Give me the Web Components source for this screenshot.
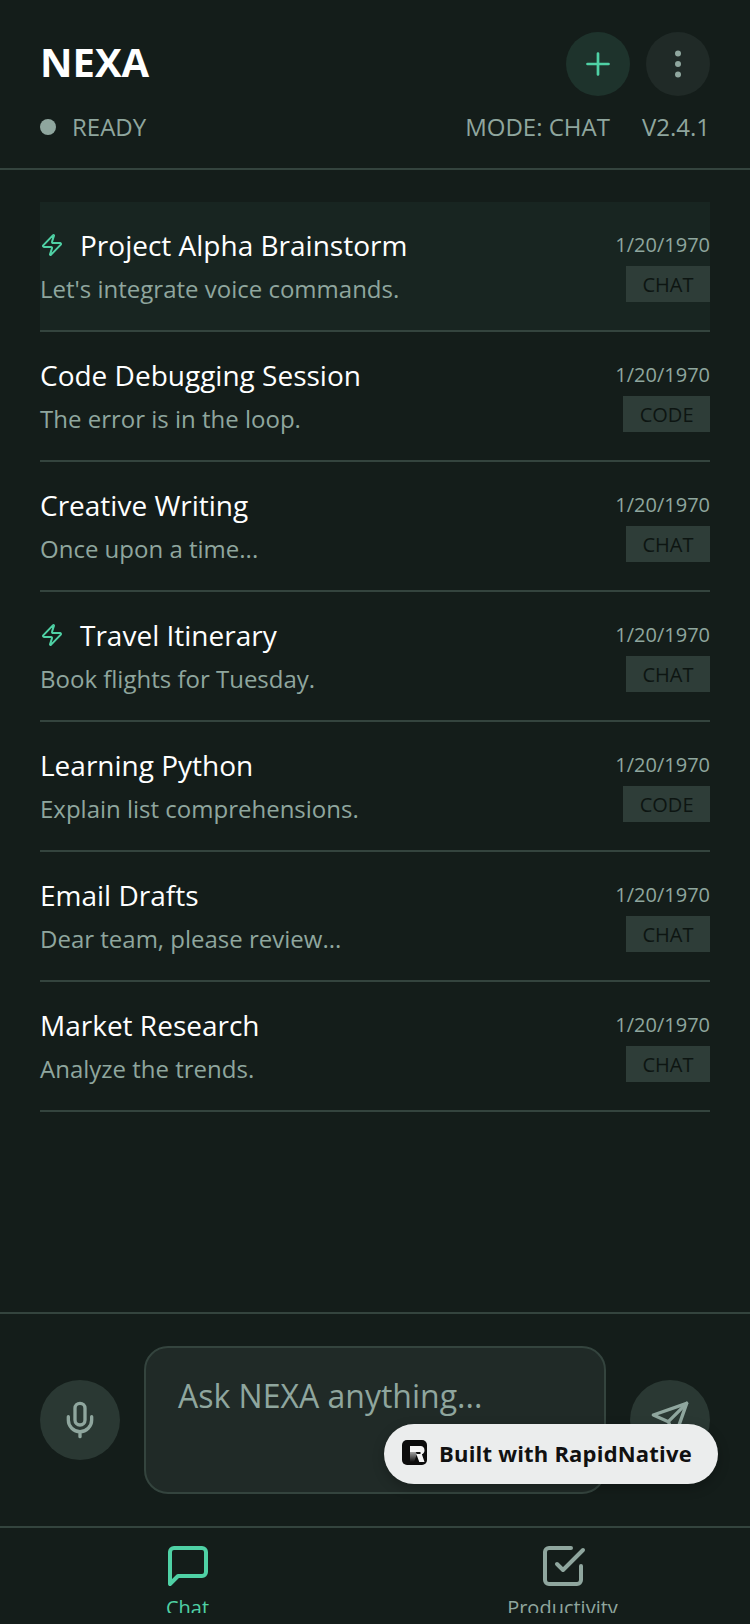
<!DOCTYPE html>
<html>
<head>
<meta charset="utf-8">
<title>NEXA</title>
<style>
    html, body {
        margin: 0;
        height: 1624px;
        overflow: hidden;
        background: #141d1a;
        font-family: "Open Sans", sans-serif;
    }
    nexa-app {
        --bg: #141d1a;
        --line: #34443e;
        --muted: #8fa69e;
        --accent: #4fd1a5;
    }
</style>
</head>
<body>
<nexa-app>
    <nexa-header></nexa-header>
    <nexa-list>
        <nexa-row title="Project Alpha Brainstorm" text="Let's integrate voice commands." tag="CHAT" bolt active></nexa-row>
        <nexa-row title="Code Debugging Session" text="The error is in the loop." tag="CODE"></nexa-row>
        <nexa-row title="Creative Writing" text="Once upon a time..." tag="CHAT"></nexa-row>
        <nexa-row title="Travel Itinerary" text="Book flights for Tuesday." tag="CHAT" bolt></nexa-row>
        <nexa-row title="Learning Python" text="Explain list comprehensions." tag="CODE"></nexa-row>
        <nexa-row title="Email Drafts" text="Dear team, please review..." tag="CHAT"></nexa-row>
        <nexa-row title="Market Research" text="Analyze the trends." tag="CHAT"></nexa-row>
    </nexa-list>
    <nexa-input></nexa-input>
    <nexa-tabs></nexa-tabs>
    <nexa-badge></nexa-badge>
</nexa-app>

<script>
class NexaApp extends HTMLElement {
    constructor() {
        super()
        this.attachShadow({ mode: 'open' }).innerHTML = `
<style>
    :host {
        display: flex;
        flex-direction: column;
        position: relative;
        width: 750px;
        height: 1624px;
        box-sizing: border-box;
        padding-bottom: 11px;
        overflow: hidden;
        background: var(--bg);
    }
</style>
<slot></slot>`
    }
}

class NexaHeader extends HTMLElement {
    constructor() {
        super()
        this.attachShadow({ mode: 'open' }).innerHTML = `
<style>
    :host {
        display: block;
        height: 168px;
        padding: 0 40px;
        border-bottom: 2px solid var(--line);
    }
    .top {
        display: flex;
        justify-content: space-between;
        align-items: center;
        padding-top: 32px;
    }
    h1 {
        margin: 0 0 4px;
        font-size: 40px;
        line-height: 60px;
        font-weight: 700;
        color: #fff;
    }
    .btns {
        display: flex;
        gap: 16px;
    }
    .btn {
        width: 64px;
        height: 64px;
        border-radius: 50%;
        display: flex;
        align-items: center;
        justify-content: center;
    }
    .add { background: #1e332c; }
    .more { background: #202a27; }
    .status {
        display: flex;
        align-items: center;
        margin-top: 15px;
        font-size: 24px;
        line-height: 32px;
        color: var(--muted);
    }
    .dot {
        width: 16px;
        height: 16px;
        border-radius: 50%;
        background: var(--muted);
        margin-right: 16px;
    }
    .mode {
        margin-left: auto;
        margin-right: 32px;
    }
</style>
<div class="top">
    <h1>NEXA</h1>
    <div class="btns">
        <div class="btn add">
            <svg width="36" height="36" viewBox="0 0 24 24" fill="none" stroke="#4fd1a5" stroke-width="1.8" stroke-linecap="round"><path d="M5 12h14M12 5v14"/></svg>
        </div>
        <div class="btn more">
            <svg width="36" height="36" viewBox="0 0 24 24" fill="#8fa69e" stroke="#8fa69e" stroke-width="2"><circle cx="12" cy="5" r="1"/><circle cx="12" cy="12" r="1"/><circle cx="12" cy="19" r="1"/></svg>
        </div>
    </div>
</div>
<div class="status">
    <span class="dot"></span>
    <span>READY</span>
    <span class="mode">MODE: CHAT</span>
    <span>V2.4.1</span>
</div>`
    }
}

class NexaList extends HTMLElement {
    constructor() {
        super()
        this.attachShadow({ mode: 'open' }).innerHTML = `
<style>
    :host {
        display: flex;
        flex-direction: column;
        flex: 1;
        padding: 32px 40px 0;
    }
</style>
<slot></slot>`
    }
}

class NexaRow extends HTMLElement {
    connectedCallback() {
        const bolt = this.hasAttribute('bolt') ? `<svg class="bolt" width="24" height="24" viewBox="0 0 24 24" fill="none" stroke="#4fd1a5" stroke-width="2" stroke-linecap="round" stroke-linejoin="round"><path d="M4 14a1 1 0 0 1-.78-1.63l9.9-10.2a.5.5 0 0 1 .86.46l-1.92 6.02A1 1 0 0 0 13 10h7a1 1 0 0 1 .78 1.63l-9.9 10.2a.5.5 0 0 1-.86-.46l1.92-6.02A1 1 0 0 0 11 14z"/></svg>` : ''
        this.attachShadow({ mode: 'open' }).innerHTML = `
<style>
    :host {
        display: flex;
        justify-content: space-between;
        padding-top: 24px;
        box-sizing: border-box;
        height: 130px;
        border-bottom: 2px solid var(--line);
    }
    :host([active]) {
        background: #182521;
    }
    .main {
        min-width: 0;
    }
    .title {
        display: flex;
        align-items: center;
        font-size: 28px;
        line-height: 38px;
        color: #fff;
    }
    .bolt {
        margin-right: 16px;
    }
    .text {
        margin-top: 9px;
        font-size: 24px;
        line-height: 32px;
        color: var(--muted);
    }
    .side {
        display: flex;
        flex-direction: column;
        align-items: flex-end;
    }
    .date {
        font-size: 20px;
        line-height: 38px;
        color: var(--muted);
    }
    .tag {
        margin-top: 2px;
        padding: 0 16.5px;
        height: 36px;
        line-height: 38px;
        font-size: 20px;
        background: #2e3d38;
        color: #0d1512;
    }
</style>
<div class="main">
    <div class="title">${bolt}<span>${this.getAttribute('title')}</span></div>
    <div class="text">${this.getAttribute('text')}</div>
</div>
<div class="side">
    <div class="date">1/20/1970</div>
    <div class="tag">${this.getAttribute('tag')}</div>
</div>`
    }
}

class NexaInput extends HTMLElement {
    constructor() {
        super()
        this.attachShadow({ mode: 'open' }).innerHTML = `
<style>
    :host {
        display: flex;
        align-items: center;
        gap: 24px;
        height: 216px;
        box-sizing: border-box;
        padding: 0 40px;
        border-top: 2px solid var(--line);
        border-bottom: 2px solid var(--line);
    }
    .round {
        width: 80px;
        height: 80px;
        border-radius: 50%;
        background: #2a3833;
        flex: none;
        display: flex;
        align-items: center;
        justify-content: center;
    }
    .field {
        flex: 1;
        height: 148px;
        box-sizing: border-box;
        border: 2px solid var(--line);
        border-radius: 24px;
        background: #202a27;
        padding: 26px 32px;
        font-size: 32px;
        line-height: 44px;
        color: var(--muted);
    }
</style>
<div class="round">
    <svg width="40" height="40" viewBox="0 0 24 24" fill="none" stroke="#8fa69e" stroke-width="2" stroke-linecap="round" stroke-linejoin="round"><path d="M12 2a3 3 0 0 0-3 3v7a3 3 0 0 0 6 0V5a3 3 0 0 0-3-3z"/><path d="M19 10v2a7 7 0 0 1-14 0v-2"/><path d="M12 19v3"/></svg>
</div>
<div class="field">Ask NEXA anything...</div>
<div class="round">
    <svg width="40" height="40" viewBox="0 0 24 24" fill="none" stroke="#8fa69e" stroke-width="2" stroke-linecap="round" stroke-linejoin="round"><path d="m22 2-7 20-4-9-9-4z"/><path d="M22 2 11 13"/></svg>
</div>`
    }
}

class NexaTabs extends HTMLElement {
    constructor() {
        super()
        this.attachShadow({ mode: 'open' }).innerHTML = `
<style>
    :host {
        display: flex;
        height: 85px;
        overflow: hidden;
    }
    .tab {
        flex: 1;
        display: flex;
        flex-direction: column;
        align-items: center;
        padding-top: 14px;
        color: var(--muted);
        font-size: 20px;
        line-height: 28px;
    }
    .tab.on { color: var(--accent); }
    svg { margin-bottom: 4px; flex: none; }
</style>
<div class="tab on">
    <svg width="48" height="48" viewBox="0 0 24 24" fill="none" stroke="currentColor" stroke-width="2" stroke-linecap="round" stroke-linejoin="round"><path d="M21 15a2 2 0 0 1-2 2H7l-4 4V5a2 2 0 0 1 2-2h14a2 2 0 0 1 2 2z"/></svg>
    <span>Chat</span>
</div>
<div class="tab">
    <svg width="48" height="48" viewBox="0 0 24 24" fill="none" stroke="currentColor" stroke-width="2" stroke-linecap="round" stroke-linejoin="round"><path d="m9 11 3 3L22 4"/><path d="M21 12v7a2 2 0 0 1-2 2H5a2 2 0 0 1-2-2V5a2 2 0 0 1 2-2h11"/></svg>
    <span>Productivity</span>
</div>`
    }
}

class NexaBadge extends HTMLElement {
    constructor() {
        super()
        this.attachShadow({ mode: 'open' }).innerHTML = `
<style>
    :host {
        position: absolute;
        left: 384px;
        top: 1424px;
        width: 334px;
        height: 60px;
        box-sizing: border-box;
        display: flex;
        align-items: center;
        gap: 12px;
        padding: 0 0 3px 18px;
        border-radius: 30px;
        background: #ebeded;
        box-shadow: 0 4px 12px rgba(0,0,0,.25);
        color: #111;
        font-size: 22px;
        font-weight: 700;
        letter-spacing: .2px;
        white-space: nowrap;
    }
    .logo {
        width: 25px;
        height: 25px;
        flex: none;
    }
</style>
<svg class="logo" viewBox="0 0 25 25">
    <defs><linearGradient id="fade" x1="0" y1="0" x2="0" y2="1"><stop offset="0" stop-color="#b0b0b0"/><stop offset="1" stop-color="#0c0c0c"/></linearGradient></defs>
    <rect width="25" height="25" rx="5" fill="#0c0c0c"/>
    <path d="M8 11h5l2 3-3 8H8z" fill="url(#fade)"/>
    <path d="M8 6h10.5c2.5 0 4 1.8 4 4.3 0 2-1 3.4-2.6 4l2.6 7.7h-5.2l-3-8h3.2c.8 0 1.2-.5 1.2-1.1s-.4-1-1.2-1H8z" fill="#f4f4f4"/>
</svg>
<span>Built with RapidNative</span>`
    }
}

customElements.define('nexa-app', NexaApp)
customElements.define('nexa-header', NexaHeader)
customElements.define('nexa-list', NexaList)
customElements.define('nexa-row', NexaRow)
customElements.define('nexa-input', NexaInput)
customElements.define('nexa-tabs', NexaTabs)
customElements.define('nexa-badge', NexaBadge)
</script>
</body>
</html>
